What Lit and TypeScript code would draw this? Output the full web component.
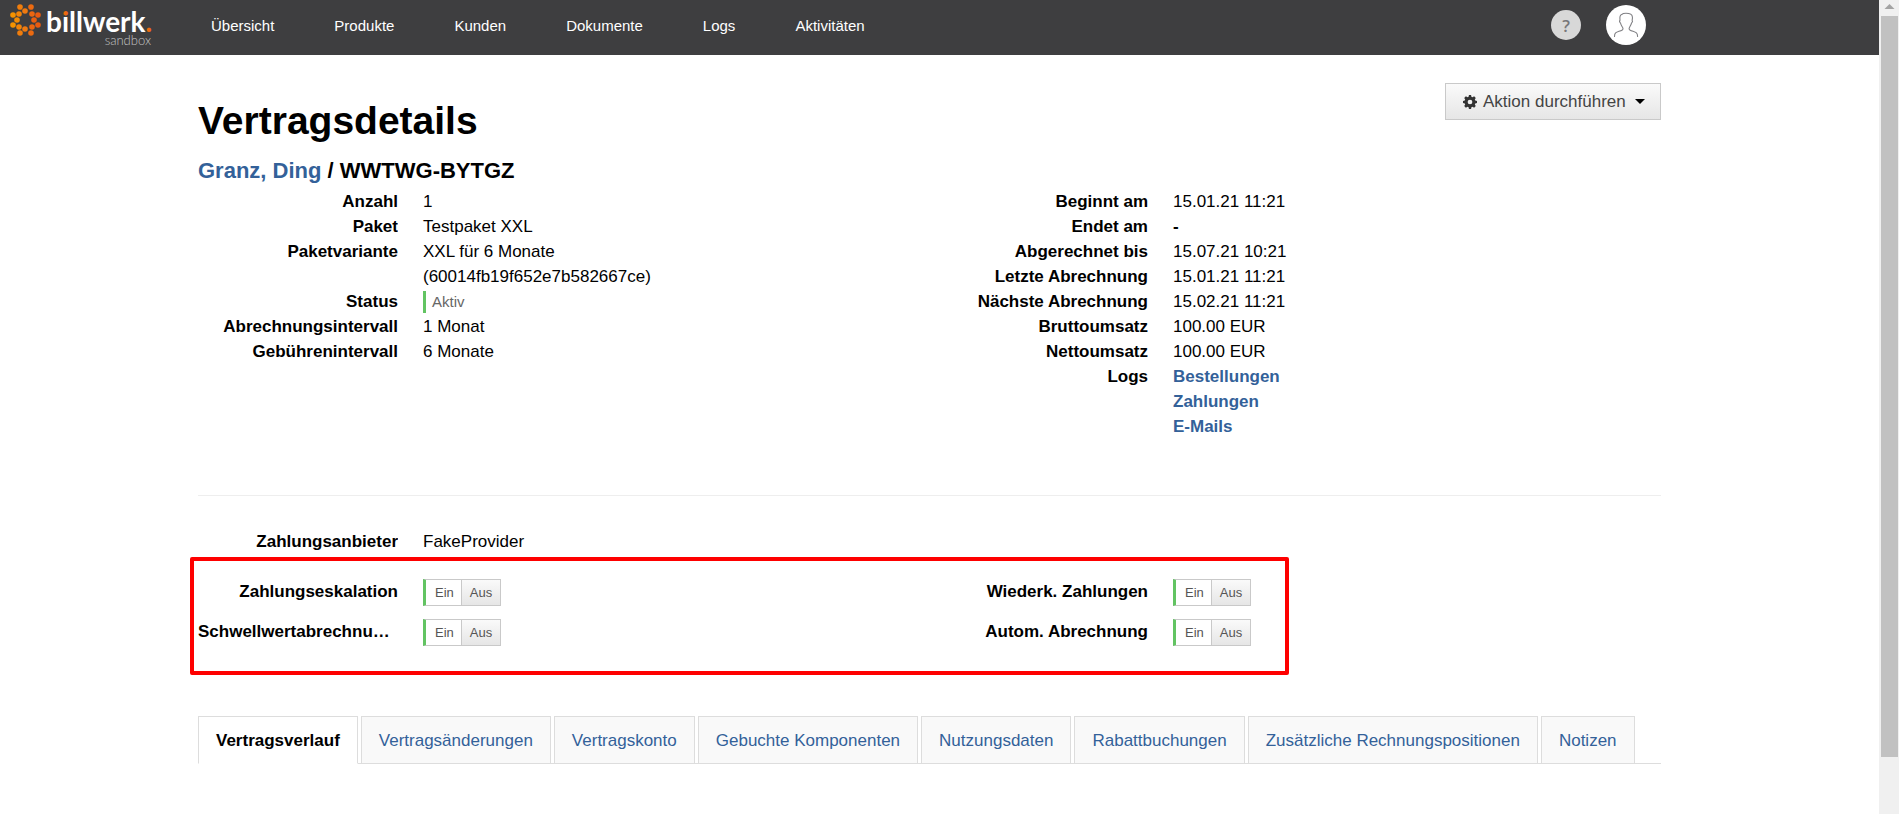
import { LitElement, html, svg, css } from "lit";
import { customElement, property, state } from "lit/decorators.js";
import { classMap } from "lit/directives/class-map.js";

@customElement("on-off-switch")
class OnOffSwitch extends LitElement {
  @property() label = "";
  @state() private on = true;

  static styles = css`
    :host { display: block; }
    .group { display: inline-flex; height: 27px; vertical-align: top; }
    .option {
      box-sizing: border-box;
      margin: 0;
      border: 1px solid #c9c9c9;
      border-radius: 0;
      padding: 0 8px;
      background: linear-gradient(#fafafa, #e6e6e6);
      color: #555;
      font: 13px/25px "Liberation Sans", Arial, sans-serif;
      cursor: pointer;
    }
    .first { border-right-width: 0; padding: 0 7px 0 11px; }
    .active { background: #fff; }
    .first.active { border-left: 3px solid #62c462; padding-left: 9px; }
  `;

  render() {
    return html`<div class="group" role="group" aria-label=${this.label}>
      <button type="button" class=${classMap({ option: true, first: true, active: this.on })}
        aria-pressed=${this.on} @click=${() => (this.on = true)}>Ein</button>
      <button type="button" class=${classMap({ option: true, active: !this.on })}
        aria-pressed=${!this.on} @click=${() => (this.on = false)}>Aus</button>
    </div>`;
  }
}

@customElement("bw-logo")
class BwLogo extends LitElement {
  static styles = css`
    :host { display: block; }
    .logo { display: block; }
    .word { font: 700 28px "Lato", sans-serif; fill: #fff; }
    .tittle { fill: url(#tittle); }
    .stop { fill: #ee6a10; }
    .sub { font: 300 13px "Lato", sans-serif; fill: #c4c4c4; }
  `;

  private dots: Array<[number, number, string]> = [
    [20, 7, "#f07d0c"], [31, 7, "#ec6a10"], [38, 15, "#e95b10"], [38, 25, "#e95b10"],
    [31, 33, "#ec6a10"], [20, 33, "#f07d0c"], [13, 25, "#f59200"], [13, 15, "#f59200"],
    [25, 11, "#ef7a10"], [32, 14, "#eb6610"], [34, 20, "#ea5f10"], [32, 27, "#eb6610"],
    [25, 29, "#ef7a10"], [19, 27, "#f28408"], [17, 20, "#f48b04"], [19, 14, "#f28408"],
  ];

  render() {
    return html`<svg class="logo" width="172" height="55" viewBox="0 0 172 55" role="img" aria-label="billwerk sandbox">
      <defs>
        <linearGradient id="tittle" gradientUnits="userSpaceOnUse" x1="0" y1="0" x2="0" y2="32">
          <stop offset="0.5" stop-color="#ee6a10" />
          <stop offset="0.5" stop-color="#fff" />
        </linearGradient>
      </defs>
      ${this.dots.map(([x, y, fill]) => svg`<circle cx=${x} cy=${y} r="2.800" fill=${fill} />`)}
      <text class="word" x="46" y="32">b<tspan class="tittle">i</tspan>llwerk<tspan class="stop">.</tspan></text>
      <text class="sub" x="151" y="45" text-anchor="end">sandbox</text>
    </svg>`;
  }
}

@customElement("app-root")
class AppRoot extends LitElement {
  @state() private tab = 0;

  static styles = css`
    :host {
      display: grid;
      grid-template-columns: minmax(0, 1fr) 20px;
      height: 100vh;
      overflow: hidden;
      background: #fff;
      color: #000;
      font: 17px/25px "Liberation Sans", Arial, sans-serif;
    }
    a { color: #336199; text-decoration: none; }
    .page { min-width: 0; overflow: hidden; }

    .topbar {
      display: flex;
      height: 55px;
      padding-right: 233px;
      background: #3e3e40;
    }
    .logo-link { width: 181px; }
    .nav { display: flex; flex: 1; align-items: center; height: 50px; }
    .nav-link { padding: 0 30px; color: #fff; font-size: 15px; line-height: 25px; }
    .tools { display: flex; align-items: center; gap: 25px; height: 50px; }
    .round {
      display: grid;
      place-items: center;
      margin: 0;
      border: 0;
      border-radius: 50%;
      padding: 0;
      cursor: pointer;
    }
    .help { width: 30px; height: 30px; background: #d8d8d8; color: #77777a; font: 600 17px "Open Sans", sans-serif; }
    .user { width: 40px; height: 40px; background: #fff; }

    .main { padding: 28px 20px 0 0; }
    .container { max-width: 1463px; margin: 0 auto; }
    .head { display: flex; justify-content: space-between; align-items: flex-start; }
    .title { margin: 13px 0 12px; font-size: 39px; line-height: 50px; font-weight: 700; }
    .subtitle { margin: 0 0 6px; font-size: 22px; line-height: 25px; font-weight: 700; }
    .action {
      display: flex;
      align-items: center;
      box-sizing: border-box;
      width: 216px;
      height: 37px;
      margin: 0;
      border: 1px solid #c9c9c9;
      padding: 0 15px 0 17px;
      background: linear-gradient(#fafafa, #e6e6e6);
      color: #444;
      font: inherit;
      white-space: nowrap;
      cursor: pointer;
    }
    .action-text { flex: 1; text-align: left; padding-left: 6px; }

    .columns { display: grid; grid-template-columns: 1fr 1fr; column-gap: 37px; }
    .list { display: grid; grid-template-columns: 200px minmax(0, 1fr); column-gap: 25px; align-content: start; margin: 0; }
    .term {
      overflow: hidden;
      font-weight: 700;
      text-align: right;
      text-overflow: ellipsis;
      white-space: nowrap;
    }
    .value { margin: 0; }
    .line { display: block; }
    .strong { font-weight: 700; }
    .status { display: flex; align-items: center; height: 25px; }
    .badge { border-left: 3px solid #62c462; padding-left: 6px; color: #666; font-size: 15px; line-height: 22px; }
    .rule { height: 1px; margin: 56px 0 33px; border: 0; background: #eee; }
    .switches { position: relative; margin-top: 25px; }
    .switches .list { grid-auto-rows: 40px; }
    .switch-cell { margin: 0; }
    .marker {
      position: absolute;
      inset: -22px 372px -16px -8px;
      border: 4px solid #fe0000;
      border-radius: 2px;
      pointer-events: none;
    }

    .tabs { display: flex; gap: 3px; margin-top: 57px; border-bottom: 1px solid #ddd; }
    .tab {
      margin: 0 0 -1px;
      border: 1px solid #ddd;
      padding: 11px 17px 10px;
      background: #f9f9f9;
      color: #336199;
      font: inherit;
      white-space: nowrap;
      cursor: pointer;
    }
    .tab.current { border-bottom-color: #fff; background: #fff; color: #000; font-weight: 700; }

    .scroll { display: flex; flex-direction: column; padding: 0 1px 0 2px; background: #f0f0f0; }
    .arrow { display: block; height: 16px; }
    .thumb { flex: 741; background: #c1c1c1; }
    .rest { flex: 57; }
  `;

  private nav = ["Übersicht", "Produkte", "Kunden", "Dokumente", "Logs", "Aktivitäten"];

  private tabs = [
    "Vertragsverlauf", "Vertragsänderungen", "Vertragskonto", "Gebuchte Komponenten",
    "Nutzungsdaten", "Rabattbuchungen", "Zusätzliche Rechnungspositionen", "Notizen",
  ];

  private left: Array<[string, unknown]> = [
    ["Anzahl", "1"],
    ["Paket", "Testpaket XXL"],
    ["Paketvariante", html`<span class="line">XXL für 6 Monate</span><span class="line">(60014fb19f652e7b582667ce)</span>`],
    ["Status", html`<span class="status"><span class="badge">Aktiv</span></span>`],
    ["Abrechnungsintervall", "1 Monat"],
    ["Gebührenintervall", "6 Monate"],
  ];

  private right: Array<[string, unknown]> = [
    ["Beginnt am", "15.01.21 11:21"],
    ["Endet am", html`<span class="strong">-</span>`],
    ["Abgerechnet bis", "15.07.21 10:21"],
    ["Letzte Abrechnung", "15.01.21 11:21"],
    ["Nächste Abrechnung", "15.02.21 11:21"],
    ["Bruttoumsatz", "100.00 EUR"],
    ["Nettoumsatz", "100.00 EUR"],
    ["Logs", ["Bestellungen", "Zahlungen", "E-Mails"].map((t) => html`<span class="line"><a class="strong" href="#">${t}</a></span>`)],
  ];

  private list(rows: Array<[string, unknown]>) {
    return html`<dl class="list">
      ${rows.map(([k, v]) => html`<dt class="term">${k}</dt><dd class="value">${v}</dd>`)}
    </dl>`;
  }

  private switchList(names: string[]) {
    return html`<dl class="list">
      ${names.map((n) => html`<dt class="term">${n}</dt>
        <dd class="switch-cell"><on-off-switch label=${n}></on-off-switch></dd>`)}
    </dl>`;
  }

  render() {
    return html`
      <div class="page">
        <header class="topbar">
          <a class="logo-link" href="#"><bw-logo></bw-logo></a>
          <nav class="nav">${this.nav.map((n) => html`<a class="nav-link" href="#">${n}</a>`)}</nav>
          <div class="tools">
            <button type="button" class="round help" aria-label="Hilfe">?</button>
            <button type="button" class="round user" aria-label="Benutzerkonto">
              <svg width="40" height="40" viewBox="0 0 40 40" fill="none" stroke="#808084" stroke-width="1.100" stroke-linecap="round" stroke-linejoin="round">
                <path d="M8.500 31.500C8.500 28 10 27.300 13 26.300C16 25.600 17.200 25 17 23.500C16.800 22 14.900 20.500 14.600 18.200C13.600 17.400 13.400 16 14 15.200C13.600 12 14 10.200 15.600 9.600C16.600 8.600 18.300 8.300 20 8.300C23.500 8.300 26.200 9.800 26.400 12C26.600 13.400 26.300 14.400 26.100 15.200C26.700 16 26.400 17.400 25.500 18.200C25 20.500 23.300 22 23.100 23.500C23 25 24.200 25.600 27 26.300C30 27.300 31.600 28 31.600 31.500"/>
              </svg>
            </button>
          </div>
        </header>

        <main class="main">
          <div class="container">
            <div class="head">
              <div>
                <h1 class="title">Vertragsdetails</h1>
                <h2 class="subtitle"><a href="#">Granz, Ding</a> / WWTWG-BYTGZ</h2>
              </div>
              <button type="button" class="action" aria-haspopup="true">
                <svg width="14" height="14" viewBox="0 0 16 16" aria-hidden="true">
                  <path fill="#333" fill-rule="evenodd" d="M6.800 0h2.400l.4 2 1.300.5L12.700 1.400l1.900 1.900-1.100 1.800.5 1.300 2 .4v2.400l-2 .4-.5 1.300 1.100 1.800-1.900 1.900-1.800-1.100-1.300.5-.4 2H6.800l-.4-2-1.300-.5-1.800 1.100-1.900-1.900 1.100-1.800L2 9.600l-2-.4V6.800l2-.4.5-1.300L1.400 3.300l1.900-1.900 1.800 1.100L6.400 2zM8 5.300a2.700 2.700 0 1 0 0 5.400 2.700 2.700 0 0 0 0-5.400z"/>
                </svg>
                <span class="action-text">Aktion durchführen</span>
                <svg width="10" height="5" viewBox="0 0 10 5" aria-hidden="true"><path d="M0 0h10L5 5z"/></svg>
              </button>
            </div>

            <div class="columns">${this.list(this.left)}${this.list(this.right)}</div>
            <hr class="rule" />
            <div class="columns">${this.list([["Zahlungsanbieter", "FakeProvider"]])}</div>

            <section class="switches">
              <div class="columns">
                ${this.switchList(["Zahlungseskalation", "Schwellwertabrechnungen"])}
                ${this.switchList(["Wiederk. Zahlungen", "Autom. Abrechnung"])}
              </div>
              <div class="marker"></div>
            </section>

            <div class="tabs" role="tablist">
              ${this.tabs.map((t, i) => html`<button type="button" role="tab" aria-selected=${i === this.tab}
                class=${classMap({ tab: true, current: i === this.tab })} @click=${() => (this.tab = i)}>${t}</button>`)}
            </div>
          </div>
        </main>
      </div>
      <div class="scroll" aria-hidden="true">
        <svg class="arrow" width="17" height="16" viewBox="0 0 17 16"><path d="M3.500 9h10L8.500 4z" fill="#a3a3a3"/></svg>
        <div class="thumb"></div>
        <div class="rest"></div>
      </div>
    `;
  }
}
